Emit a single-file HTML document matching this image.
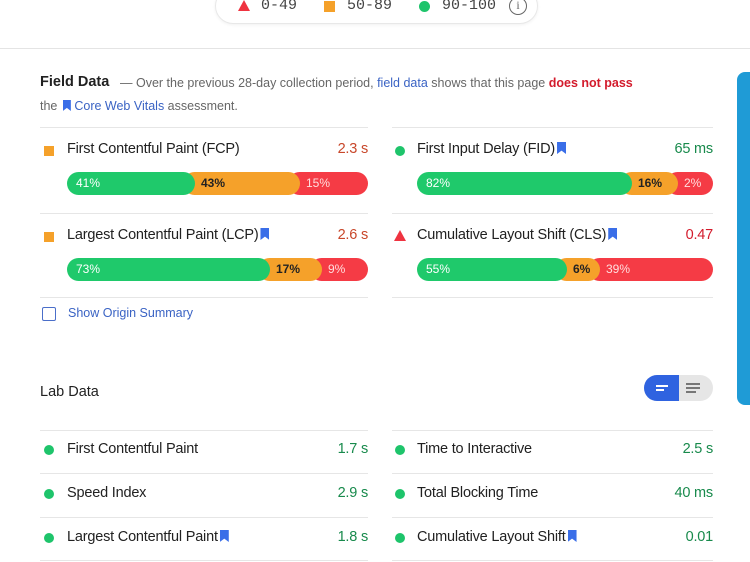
<!DOCTYPE html>
<html><head><meta charset="utf-8"><style>
*{margin:0;padding:0;box-sizing:border-box}
body{width:750px;height:562px;overflow:hidden;background:#fff;font-family:"Liberation Sans",Arial,sans-serif;color:#212121;position:relative}
.a{position:absolute;white-space:nowrap}
.line{position:absolute;height:1px;background:#e6e6e6}
.t{font-size:14.5px;color:#212121;letter-spacing:-0.2px}
.v{font-size:14.5px;text-align:right;letter-spacing:-0.2px}
.g{color:#188a4c}.o{color:#c8472a}.r{color:#d31b2c}
.sq{position:absolute;width:10px;height:10px;background:#f5a12a}
.dot{position:absolute;width:10px;height:10px;border-radius:50%;background:#1ec46b}
.tri{position:absolute;width:0;height:0;border-left:6px solid transparent;border-right:6px solid transparent;border-bottom:11px solid #ef3340}
.bm{display:inline-block;width:9px;height:12px;background:#3a6ee8;vertical-align:-1px;margin-left:2px;clip-path:polygon(0 0,100% 0,100% 100%,50% 72%,0 100%)}
.bar{position:absolute;height:23px}
.seg{position:absolute;top:0;height:23px;border-radius:12px;font-size:12px;line-height:23px;padding-left:9px;color:#fff}
.G{background:#1fc96b}.O{background:#f5a12a;color:#222;font-weight:bold;padding-left:18px}.R{background:#f53b45;color:#ffdede;padding-left:18px}
</style></head><body>
<div class="a" style="left:215px;top:-12px;width:323px;height:36px;border:1px solid #e8e8e8;border-radius:18px;box-shadow:0 1px 3px rgba(0,0,0,.06)"></div>
<div class="tri" style="left:238px;top:0"></div>
<div class="a" style="left:261px;top:-3px;font-family:'Liberation Mono',monospace;font-size:15px;color:#444">0-49</div>
<div class="sq" style="left:324px;top:1px;width:11px;height:11px"></div>
<div class="a" style="left:347px;top:-3px;font-family:'Liberation Mono',monospace;font-size:15px;color:#444">50-89</div>
<div class="dot" style="left:419px;top:1px;width:11px;height:11px"></div>
<div class="a" style="left:442px;top:-3px;font-family:'Liberation Mono',monospace;font-size:15px;color:#444">90-100</div>
<div class="a" style="left:509px;top:-3px;width:18px;height:18px;border:1.5px solid #666;border-radius:50%;font-size:12px;color:#666;text-align:center;line-height:15px;font-family:'Liberation Serif',serif">i</div>
<div class="line" style="left:0;top:48px;width:750px;background:#e4e4e4"></div>
<div class="a" style="left:737px;top:72px;width:20px;height:333px;background:#1f9bd6;border-radius:8px 0 0 8px"></div>

<div class="a" style="left:40px;top:74px;font-size:14.5px;font-weight:bold;color:#212121">Field Data</div>
<div class="a" style="left:120px;top:76px;font-size:12.5px;color:#666">— Over the previous 28-day collection period, <span style="color:#3a63c4">field data</span> shows that this page <span style="color:#d31b2c;font-weight:bold">does not pass</span></div>
<div class="a" style="left:40px;top:99px;font-size:12.5px;color:#666">the <span class="bm" style="width:8px;height:11px"></span> <span style="color:#3a63c4">Core Web Vitals</span> assessment.</div>

<div class="line" style="left:40px;top:127px;width:328px"></div>
<div class="line" style="left:392px;top:127px;width:321px"></div>

<div class="sq" style="left:44px;top:146px"></div>
<div class="a t" style="left:67px;top:141px">First Contentful Paint (FCP)</div>
<div class="a v o" style="right:382px;top:141px">2.3 s</div>
<div class="dot" style="left:395px;top:146px"></div>
<div class="a t" style="left:417px;top:141px">First Input Delay (FID)<span class="bm"></span></div>
<div class="a v g" style="right:37px;top:141px">65 ms</div>

<div class="bar" style="left:67px;top:172px;width:301px">
<div class="seg R" style="left:221px;width:80px">15%</div>
<div class="seg O" style="left:116px;width:117px">43%</div>
<div class="seg G" style="left:0;width:128px">41%</div></div>
<div class="bar" style="left:417px;top:172px;width:296px">
<div class="seg R" style="left:249px;width:47px">2%</div>
<div class="seg O" style="left:203px;width:58px">16%</div>
<div class="seg G" style="left:0;width:215px">82%</div></div>

<div class="line" style="left:40px;top:213px;width:328px"></div>
<div class="line" style="left:392px;top:213px;width:321px"></div>

<div class="sq" style="left:44px;top:232px"></div>
<div class="a t" style="left:67px;top:227px">Largest Contentful Paint (LCP)<span class="bm"></span></div>
<div class="a v o" style="right:382px;top:227px">2.6 s</div>
<div class="tri" style="left:394px;top:230px"></div>
<div class="a t" style="left:417px;top:227px">Cumulative Layout Shift (CLS)<span class="bm"></span></div>
<div class="a v r" style="right:37px;top:227px">0.47</div>

<div class="bar" style="left:67px;top:258px;width:301px">
<div class="seg R" style="left:243px;width:58px">9%</div>
<div class="seg O" style="left:191px;width:64px">17%</div>
<div class="seg G" style="left:0;width:203px">73%</div></div>
<div class="bar" style="left:417px;top:258px;width:296px">
<div class="seg R" style="left:171px;width:125px">39%</div>
<div class="seg O" style="left:138px;width:45px">6%</div>
<div class="seg G" style="left:0;width:150px">55%</div></div>

<div class="line" style="left:40px;top:297px;width:328px"></div>
<div class="line" style="left:392px;top:297px;width:321px"></div>

<div class="a" style="left:42px;top:307px;width:14px;height:14px;border:1.5px solid #4a6ec9;border-radius:2px"></div>
<div class="a" style="left:68px;top:306px;font-size:12.5px;color:#3a63c4">Show Origin Summary</div>

<div class="a" style="left:40px;top:384px;font-size:14.5px;color:#212121">Lab Data</div>
<div class="a" style="left:644px;top:375px;width:69px;height:26px;border-radius:13px;background:#e6e6e6;overflow:hidden">
<div style="position:absolute;left:0;top:0;width:35px;height:26px;background:#2f63e0"></div>
<div style="position:absolute;left:12px;top:10px;width:12px;height:2px;background:#fff"></div>
<div style="position:absolute;left:12px;top:14px;width:8px;height:2px;background:#fff"></div>
<div style="position:absolute;left:42px;top:8px;width:14px;height:2px;background:#777"></div>
<div style="position:absolute;left:42px;top:12px;width:14px;height:2px;background:#777"></div>
<div style="position:absolute;left:42px;top:16px;width:10px;height:2px;background:#777"></div>
</div>

<div class="line" style="left:40px;top:430px;width:328px"></div>
<div class="line" style="left:392px;top:430px;width:321px"></div>
<div class="dot" style="left:44px;top:445px"></div>
<div class="a t" style="left:67px;top:441px">First Contentful Paint</div>
<div class="a v g" style="right:382px;top:441px">1.7 s</div>
<div class="dot" style="left:395px;top:445px"></div>
<div class="a t" style="left:417px;top:441px">Time to Interactive</div>
<div class="a v g" style="right:37px;top:441px">2.5 s</div>

<div class="line" style="left:40px;top:473px;width:328px"></div>
<div class="line" style="left:392px;top:473px;width:321px"></div>
<div class="dot" style="left:44px;top:489px"></div>
<div class="a t" style="left:67px;top:485px">Speed Index</div>
<div class="a v g" style="right:382px;top:485px">2.9 s</div>
<div class="dot" style="left:395px;top:489px"></div>
<div class="a t" style="left:417px;top:485px">Total Blocking Time</div>
<div class="a v g" style="right:37px;top:485px">40 ms</div>

<div class="line" style="left:40px;top:517px;width:328px"></div>
<div class="line" style="left:392px;top:517px;width:321px"></div>
<div class="dot" style="left:44px;top:533px"></div>
<div class="a t" style="left:67px;top:529px">Largest Contentful Paint<span class="bm"></span></div>
<div class="a v g" style="right:382px;top:529px">1.8 s</div>
<div class="dot" style="left:395px;top:533px"></div>
<div class="a t" style="left:417px;top:529px">Cumulative Layout Shift<span class="bm"></span></div>
<div class="a v g" style="right:37px;top:529px">0.01</div>
<div class="line" style="left:40px;top:560px;width:328px"></div>
<div class="line" style="left:392px;top:560px;width:321px"></div>
</body></html>
